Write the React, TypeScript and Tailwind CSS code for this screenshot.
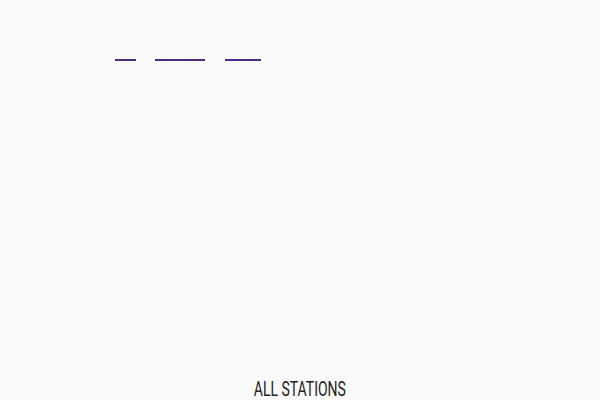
import React from "react";

export default function App() {
  return (
    <div className="flex h-[400px] w-[600px] flex-col overflow-hidden bg-[#fafafa]" style={{ fontFamily: "Roboto, 'Liberation Sans', sans-serif" }}>
      <nav className="flex pl-[115px] pt-[45px]">
        <a className="block w-[21px] border-b-2 border-[#4a2b87] pb-[3px] text-[10px] leading-[11px] text-[#f8f6f8]">Hi</a>
        <a className="ml-[19px] block w-[50px] border-b-2 border-[#4a2b87] pb-[3px] text-[10px] leading-[11px] text-[#f8f6f8]">Stations</a>
        <a className="ml-[20px] block w-[36px] border-b-2 border-[#4a2b87] pb-[3px] text-[10px] leading-[11px] text-[#f8f6f8]">About</a>
      </nav>
      <div className="mt-auto flex justify-center">
        <span className="inline-block origin-center scale-x-[0.7] text-[20px] font-normal leading-[22px] text-[#222222]">ALL STATIONS</span>
      </div>
    </div>
  );
}
